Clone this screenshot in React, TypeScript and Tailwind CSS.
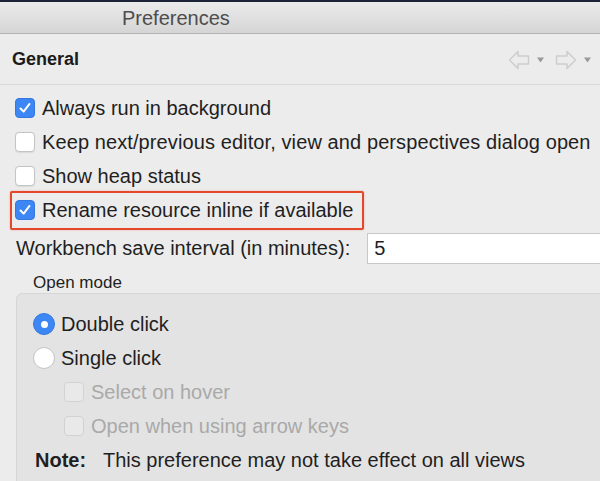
import React from 'react';

const font = { fontFamily: '"Liberation Sans", Arial, sans-serif' };

const CheckMark: React.FC = () => (
    <svg viewBox="0 0 20 20" className="w-[20px] h-[20px]">
        <path d="M5 10.5 L8.5 14 L15 5.5" fill="none" stroke="white" strokeWidth="2.2" strokeLinecap="round" strokeLinejoin="round" />
    </svg>
);

const Checkbox: React.FC<{ checked?: boolean; disabled?: boolean }> = ({ checked, disabled }) => {
    if (checked) {
        return (
            <span className="w-[20px] h-[20px] shrink-0 rounded-[4px] bg-[#3d87f5] border border-[#3478e0] flex items-center justify-center">
                <CheckMark />
            </span>
        );
    }
    if (disabled) {
        return <span className="w-[20px] h-[20px] shrink-0 rounded-[4px] bg-[#e9e9e9] border border-[#d2d2d2]" />;
    }
    return <span className="w-[20px] h-[20px] shrink-0 rounded-[4px] bg-white border border-[#c4c4c4] shadow-[0_0.5px_1px_rgba(0,0,0,0.08)]" />;
};

const Radio: React.FC<{ selected?: boolean }> = ({ selected }) =>
    selected ? (
        <span className="w-[22px] h-[22px] shrink-0 rounded-full bg-[#3d87f5] border border-[#3478e0] flex items-center justify-center">
            <span className="w-[7px] h-[7px] rounded-full bg-white" />
        </span>
    ) : (
        <span className="w-[22px] h-[22px] shrink-0 rounded-full bg-white border border-[#c4c4c4]" />
    );

const NavArrows: React.FC = () => (
    <div className="flex items-center gap-[7px] mt-[2px]">
        <svg width="22" height="20" viewBox="0 0 22 20">
            <path d="M1.5 10 L10 1.5 L10 6 L20.5 6 L20.5 14 L10 14 L10 18.5 Z" fill="none" stroke="#cdcdcd" strokeWidth="1.5" strokeLinejoin="round" />
        </svg>
        <svg width="7" height="6" viewBox="0 0 7 6" className="mr-[4px]">
            <path d="M0 0.5 L7 0.5 L3.5 5.5 Z" fill="#9a9a9a" />
        </svg>
        <svg width="22" height="20" viewBox="0 0 22 20">
            <path d="M20.5 10 L12 1.5 L12 6 L1.5 6 L1.5 14 L12 14 L12 18.5 Z" fill="none" stroke="#cdcdcd" strokeWidth="1.5" strokeLinejoin="round" />
        </svg>
        <svg width="7" height="6" viewBox="0 0 7 6">
            <path d="M0 0.5 L7 0.5 L3.5 5.5 Z" fill="#9a9a9a" />
        </svg>
    </div>
);

const App: React.FC = () => {
    return (
        <div className="w-[600px] h-[481px] overflow-hidden bg-[#ececec] text-[#1f1f1f]" style={font}>
            {/* Title bar */}
            <div className="h-[34px] border-t-2 border-[#1c2336] bg-gradient-to-b from-[#ebebeb] to-[#d5d5d5] border-b border-b-[#b3b3b3] flex items-center pl-[122px]">
                <span className="text-[20px] text-[#4d4d4d] leading-none">Preferences</span>
            </div>

            {/* Page header */}
            <div className="h-[51px] flex items-center justify-between pl-[12px] pr-[9px] border-b border-[#d9d9d9]">
                <span className="text-[18px] font-bold text-[#1a1a1a]">General</span>
                <NavArrows />
            </div>

            {/* Options */}
            <div className="pt-[6px] flex flex-col">
                <div className="h-[34px] flex items-center gap-[7px] pl-[15px]">
                    <Checkbox checked />
                    <span className="text-[20px] whitespace-nowrap">Always run in background</span>
                </div>
                <div className="h-[34px] flex items-center gap-[7px] pl-[15px]">
                    <Checkbox />
                    <span className="text-[20px] whitespace-nowrap tracking-[0.1px]">Keep next/previous editor, view and perspectives dialog open</span>
                </div>
                <div className="h-[34px] flex items-center gap-[7px] pl-[15px]">
                    <Checkbox />
                    <span className="text-[20px] whitespace-nowrap">Show heap status</span>
                </div>
                <div className="h-[34px] flex items-center gap-[7px] pl-[15px] relative">
                    <span className="absolute left-[10px] top-[-2px] w-[354px] h-[39px] border-[2.5px] border-[#e4472a] rounded-[2px] shadow-[0_0_2px_rgba(228,71,42,0.4)]" />
                    <Checkbox checked />
                    <span className="text-[20px] whitespace-nowrap">Rename resource inline if available</span>
                </div>

                <div className="h-[40px] mt-[1px] flex items-center pl-[16px] gap-[17px]">
                    <span className="text-[20px] whitespace-nowrap">Workbench save interval (in minutes):</span>
                    <div className="h-[31px] flex-1 bg-white border border-[#c8c8c8] flex items-center pl-[6px] -mr-[10px]">
                        <span className="text-[20px]">5</span>
                    </div>
                </div>

                {/* Open mode group */}
                <div className="pl-[33px] h-[18px] mt-[6px] flex items-center">
                    <span className="text-[17px] whitespace-nowrap">Open mode</span>
                </div>
                <div className="ml-[16px] -mr-[10px] mt-[1px] bg-[#e3e3e3] border border-[#d6d6d6] rounded-tl-[6px] pt-[13px] flex flex-col h-[200px]">
                    <div className="h-[34px] flex items-center gap-[6px] pl-[16px]">
                        <Radio selected />
                        <span className="text-[20px] whitespace-nowrap">Double click</span>
                    </div>
                    <div className="h-[34px] flex items-center gap-[6px] pl-[16px]">
                        <Radio />
                        <span className="text-[20px] whitespace-nowrap">Single click</span>
                    </div>
                    <div className="h-[34px] flex items-center gap-[7px] pl-[47px]">
                        <Checkbox disabled />
                        <span className="text-[20px] whitespace-nowrap text-[#a9a9a9]">Select on hover</span>
                    </div>
                    <div className="h-[34px] flex items-center gap-[7px] pl-[47px]">
                        <Checkbox disabled />
                        <span className="text-[20px] whitespace-nowrap text-[#a9a9a9]">Open when using arrow keys</span>
                    </div>
                    <div className="h-[34px] flex items-center pl-[18px]">
                        <span className="text-[20px] font-bold w-[68px]">Note:</span>
                        <span className="text-[20px] whitespace-nowrap">This preference may not take effect on all views</span>
                    </div>
                </div>
            </div>
        </div>
    );
};

export default App;
